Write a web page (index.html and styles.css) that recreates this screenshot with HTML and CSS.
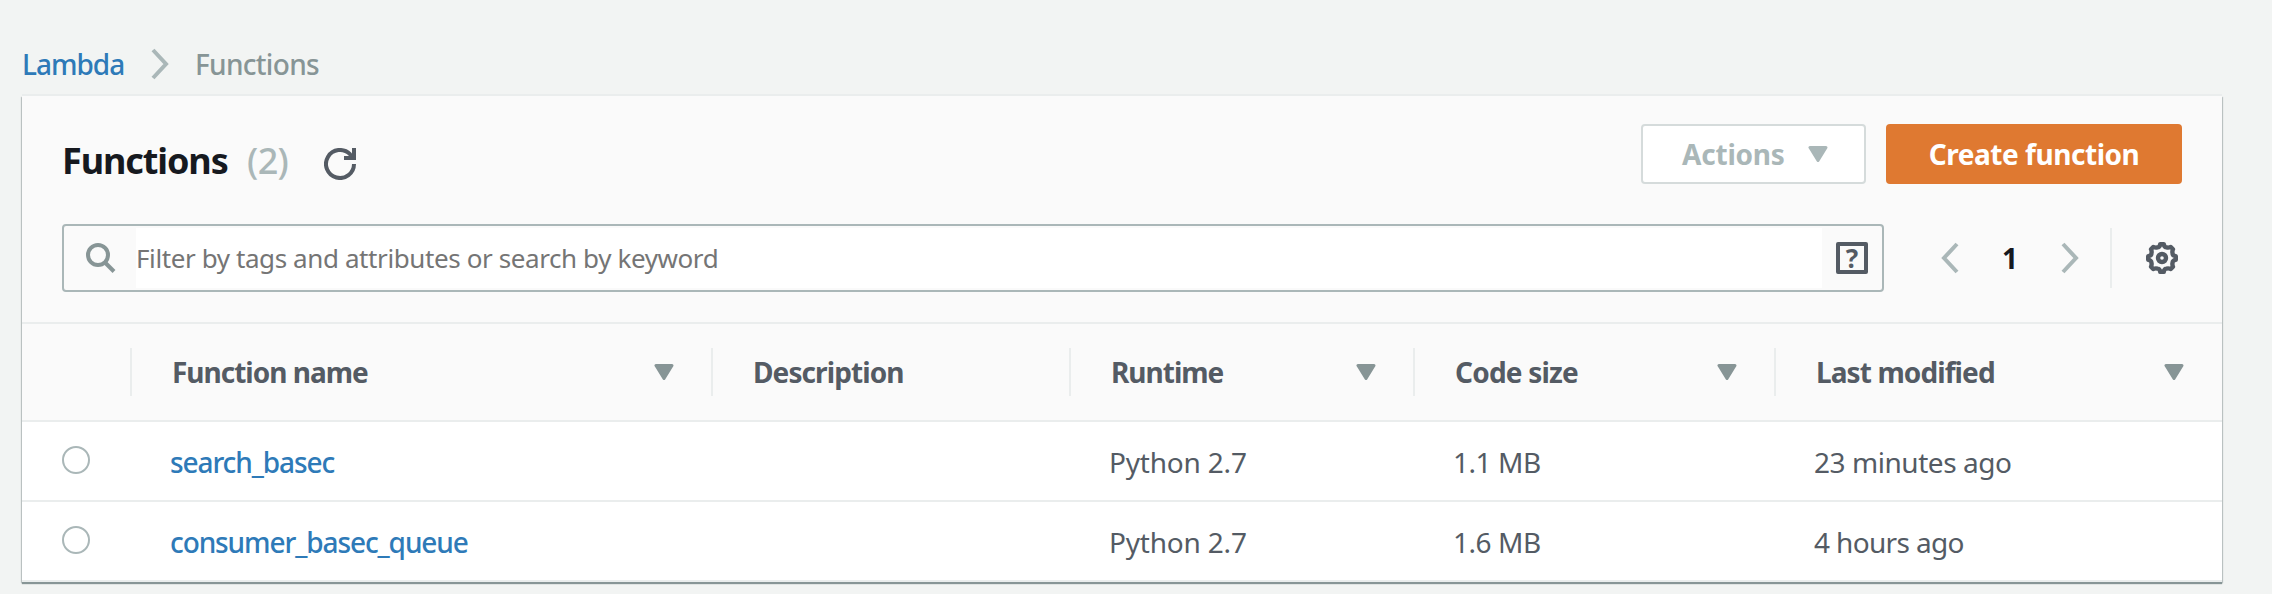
FILE: index.html
```html
<!DOCTYPE html>
<html lang="en">
<head>
<meta charset="utf-8">
<title>Functions</title>
<link rel="stylesheet" href="styles.css">
</head>
<body>
<nav class="crumbs">
  <a class="link t-lambda">Lambda</a>
  <svg class="crumb-sep" width="20" height="32" viewBox="0 0 20 32"><path d="M3 2 16 16 3 30" fill="none" stroke="#aab7b8" stroke-width="4"/></svg>
  <span class="t-crumb">Functions</span>
</nav>
<main class="panel">
  <header class="head">
    <h1 class="title">Functions</h1>
    <span class="count">(2)</span>
    <svg class="refresh" width="32" height="32" viewBox="0 0 32 32" fill="none" stroke="#545b64" stroke-width="4"><path d="M30 16A14 14 0 1 1 26 6.200L29 10"/><path d="M30 0V10H20"/></svg>
    <button class="btn actions"><span class="t-actions">Actions</span><svg class="caret" width="20" height="16" viewBox="0 0 20 16"><path d="M2 1.500H18L10 14.500Z" fill="#aab7b8" stroke="#aab7b8" stroke-width="3" stroke-linejoin="round"/></svg></button>
    <button class="btn create"><span class="t-create">Create function</span></button>
  </header>
  <section class="tools">
    <div class="search">
      <svg class="glass" width="32" height="32" viewBox="0 0 32 32" fill="none" stroke="#879596" stroke-width="4"><circle cx="14" cy="13" r="10"/><path d="M21 20.500 30 29.500"/></svg>
      <div class="field"><span class="t-filter">Filter by tags and attributes or search by keyword</span></div>
      <div class="help">?</div>
    </div>
    <svg class="prev" width="20" height="32" viewBox="0 0 20 32"><path d="M17 2 4 16 17 30" fill="none" stroke="#aab7b8" stroke-width="4"/></svg>
    <span class="page">1</span>
    <svg class="next" width="20" height="32" viewBox="0 0 20 32"><path d="M3 2 16 16 3 30" fill="none" stroke="#aab7b8" stroke-width="4"/></svg>
    <span class="rule"></span>
    <svg class="gear" width="32" height="32" viewBox="0 0 32 32" fill="none" stroke="#545b64" stroke-width="4.400"><circle cx="16" cy="16" r="4"/><path stroke-linejoin="round" d="M14.200 2.200H17.800Q18.300 5.400 20.600 5.400 22.500 6 24.800 5L27 7.200Q26 9.500 26.600 11.400 26.600 13.700 29.800 14.200V17.800Q26.600 18.300 26.600 20.600 26 22.500 27 24.800L24.800 27Q22.500 26 20.600 26.600 18.300 26.600 17.800 29.800H14.200Q13.700 26.600 11.400 26.600 9.500 26 7.200 27L5 24.800Q6 22.500 5.400 20.600 5.400 18.300 2.200 17.800V14.200Q5.400 13.700 5.400 11.400 6 9.500 5 7.200L7.200 5Q9.500 6 11.400 5.400 13.700 5.400 14.200 2.200Z"/></svg>
  </section>
  <div class="row thead">
    <div class="cell"></div>
    <div class="cell"><span class="t-name">Function name</span><svg class="caret" width="20" height="16" viewBox="0 0 20 16"><path d="M2 1.500H18L10 14.500Z" fill="#879596" stroke="#879596" stroke-width="3" stroke-linejoin="round"/></svg></div>
    <div class="cell"><span class="t-desc">Description</span></div>
    <div class="cell"><span class="t-run">Runtime</span><svg class="caret" width="20" height="16" viewBox="0 0 20 16"><path d="M2 1.500H18L10 14.500Z" fill="#879596" stroke="#879596" stroke-width="3" stroke-linejoin="round"/></svg></div>
    <div class="cell"><span class="t-size">Code size</span><svg class="caret" width="20" height="16" viewBox="0 0 20 16"><path d="M2 1.500H18L10 14.500Z" fill="#879596" stroke="#879596" stroke-width="3" stroke-linejoin="round"/></svg></div>
    <div class="cell"><span class="t-mod">Last modified</span><svg class="caret" width="20" height="16" viewBox="0 0 20 16"><path d="M2 1.500H18L10 14.500Z" fill="#879596" stroke="#879596" stroke-width="3" stroke-linejoin="round"/></svg></div>
  </div>
  <div class="row item">
    <div class="cell pick"><span class="radio"></span></div>
    <div class="cell"><a class="link t-id">search_basec</a></div>
    <div class="cell"></div>
    <div class="cell"><span class="t-py">Python 2.7</span></div>
    <div class="cell"><span class="t-mb">1.1 MB</span></div>
    <div class="cell"><span class="t-min">23 minutes ago</span></div>
  </div>
  <div class="row item">
    <div class="cell pick"><span class="radio"></span></div>
    <div class="cell"><a class="link t-id">consumer_basec_queue</a></div>
    <div class="cell"></div>
    <div class="cell"><span class="t-py">Python 2.7</span></div>
    <div class="cell"><span class="t-mb">1.6 MB</span></div>
    <div class="cell"><span class="t-hours">4 hours ago</span></div>
  </div>
</main>
</body>
</html>
```
FILE: styles.css
```css
* { box-sizing: border-box; }
body { margin: 0; height: 594px; overflow: hidden; background: #f2f4f3; color: #545b64; font: 28px/44px "Noto Sans", sans-serif; white-space: nowrap; }
svg { display: block; flex: none; }
.link { color: #2e7ab8; }
.crumbs { height: 96px; padding: 42px 0 0 22px; display: flex; color: #879596; font-weight: 500; }
.crumb-sep { margin: 6px 0 0 27px; }
.t-lambda { width: 101px; letter-spacing: -1px; }
.t-crumb { margin-left: 25px; letter-spacing: -0.7px; }
.panel { width: 2200px; height: 486px; margin-left: 22px; background: #fff; box-shadow: 0 -2px 0 #eaeded, 0 2px 1px #879596, 1px 1px 1px #c4caca, -1px 1px 1px #c4caca; }
.head { height: 128px; background: #fafafa; padding: 28px 40px 0; display: flex; }
.title { width: 166px; margin: 15px 0 0; font-size: 36px; line-height: 44px; font-weight: 700; color: #16191f; letter-spacing: -1.1px; }
.count { width: 42px; margin: 15px 0 0 19px; font-size: 36px; font-weight: 500; color: #aab7b8; letter-spacing: -0.6px; }
.refresh { margin: 24px 0 0 35px; }
.btn { height: 60px; border-radius: 4px; font: 700 28px/44px "Noto Sans", sans-serif; display: flex; align-items: center; padding: 0; flex: none; }
.actions { width: 225px; margin-left: auto; border: 2px solid #d5dbdb; background: #fff; color: #aab7b8; padding: 0 36px 0 39px; justify-content: space-between; letter-spacing: -0.2px; }
.create { width: 296px; margin-left: 20px; border: 0; background: #df7931; color: #fff; justify-content: center; letter-spacing: -0.45px; }
.tools { height: 98px; background: #fafafa; padding: 0 40px; display: flex; align-items: flex-start; }
.search { flex: none; width: 1822px; height: 68px; border: 2px solid #aab7b8; border-radius: 4px; display: flex; align-items: center; padding: 2px 14px 2px 20px; }
.field { flex: 1; height: 60px; margin: 0 14px 0 20px; background: #fff; color: #757575; line-height: 60px; font-size: 26px; letter-spacing: -0.4px; }
.help { width: 32px; height: 32px; border: 4px solid #545b64; border-radius: 2px; font: 700 26px/24px "Noto Sans", sans-serif; text-align: center; }
.prev { margin: 18px 0 0 56px; }
.page { width: 20px; margin: 12px 0 0 40px; font-weight: 700; color: #16191f; text-align: center; }
.next { margin: 18px 0 0 40px; }
.rule { width: 2px; height: 60px; margin: 4px 0 0 30px; background: #eaeded; }
.gear { margin: 18px 0 0 34px; }
.row { display: grid; grid-template-columns: 110px 581px 358px 344px 361px 446px; }
.cell { display: flex; align-items: center; padding-left: 38px; }
.thead { height: 100px; background: #fafafa; border-top: 2px solid #eaeded; border-bottom: 2px solid #eaeded; padding: 24px 0; font-weight: 700; }
.thead .cell { height: 48px; border-right: 2px solid #eaeded; padding: 0 37px 0 40px; justify-content: space-between; }
.thead .cell:last-child { border: 0; padding-right: 38px; }
.t-name { letter-spacing: -1px; }
.t-desc { letter-spacing: -0.9px; }
.t-run { letter-spacing: -1px; }
.t-size { letter-spacing: -0.8px; }
.t-mod { letter-spacing: -0.9px; }
.item { height: 80px; border-bottom: 2px solid #eaeded; padding-top: 1px; }
.t-id { font-weight: 500; letter-spacing: -1.1px; }
.t-py { letter-spacing: -0.2px; }
.t-mb { letter-spacing: -0.45px; }
.t-min { letter-spacing: -0.45px; }
.t-hours { letter-spacing: -0.65px; }
.pick { padding: 0 0 3px 40px; }
.radio { width: 28px; height: 28px; border: 2px solid #aab7b8; border-radius: 50%; }
```
